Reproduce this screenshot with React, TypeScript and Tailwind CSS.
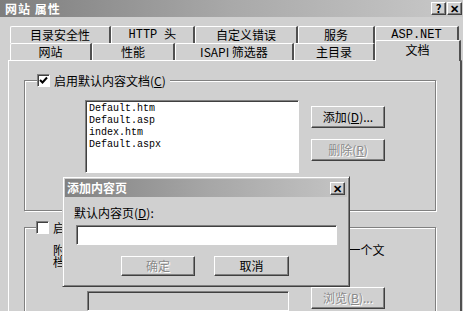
const font = "font-['Noto_Sans_CJK_SC','Noto_Sans_CJK_JP',sans-serif]";

const raised =
  "border border-t-white border-l-white border-r-[#404040] border-b-[#404040] shadow-[inset_-1px_-1px_0_#808080]";
const sunken =
  "border border-t-[#808080] border-l-[#808080] border-r-white border-b-white shadow-[inset_1px_1px_0_#404040]";
const etched = "border border-[#808080] shadow-[1px_1px_0_#fff,inset_1px_1px_0_#fff]";

const Btn = ({ children, disabled, className = "" }: { children: React.ReactNode; disabled?: boolean; className?: string }) => (
  <div
    className={`${raised} flex items-center justify-center text-[12px] leading-none bg-[#d0d0d0] ${
      disabled ? "text-[#8a8a8a] [text-shadow:1px_1px_0_#fff]" : "text-black"
    } ${className}`}
  >
    {children}
  </div>
);

const CapBtn = ({ children }: { children: React.ReactNode }) => (
  <div className={`${raised} w-[15px] h-[13px] flex items-center justify-center bg-[#d0d0d0] text-[11px] font-bold leading-none text-black`}>
    {children}
  </div>
);

const Check = ({ checked }: { checked?: boolean }) => (
  <div className={`${sunken} w-[13px] h-[13px] bg-white flex items-center justify-center`}>
    {checked && (
      <svg width="9" height="9" viewBox="0 0 9 9">
        <path d="M1 4 L3.5 6.5 L8 1.5" fill="none" stroke="#000" strokeWidth="2" />
      </svg>
    )}
  </div>
);

const Tab = ({ label, w, mono }: { label: string; w: number; mono?: boolean }) => (
  <div
    style={{ width: w }}
    className={`h-full shrink-0 border-t border-l border-t-white border-l-white border-r-2 border-r-[#505050] rounded-tl-[2px] flex items-center justify-center text-[12px] leading-none text-black ${
      mono ? "font-['Liberation_Mono',monospace] text-[11px]" : ""
    }`}
  >
    {label}
  </div>
);

export default function App() {
  return (
    <div className={`relative w-[463px] h-[311px] overflow-hidden bg-[#d0d0d0] ${font}`}>
      {/* title bar */}
      <div className="h-[17px] flex items-center justify-between pl-[5px] pr-[1px] bg-gradient-to-r from-[#7e7e7e] via-[#a9a9a9] to-[#c9c9c9]">
        <span className="text-white font-bold text-[12px] leading-none tracking-[1px]">网站 属性</span>
        <div className="flex gap-[1px]">
          <CapBtn>?</CapBtn>
          <CapBtn>✕</CapBtn>
        </div>
      </div>

      <div className="pt-[9px] pl-[8px]">
        {/* tab row 1 */}
        <div className="flex h-[17px] pl-[2px]">
          <Tab label="目录安全性" w={101} />
          <Tab label="HTTP 头" w={84} mono />
          <Tab label="自定义错误" w={103} />
          <Tab label="服务" w={77} />
          <Tab label="ASP.NET" w={84} mono />
        </div>
        {/* tab row 2 */}
        <div className="flex h-[17px] pl-[2px] relative z-10">
          <Tab label="网站" w={82} />
          <Tab label="性能" w={83} />
          <Tab label="ISAPI 筛选器" w={119} />
          <Tab label="主目录" w={81} />
          <div className="w-[86px] h-[21px] -mt-[3px] shrink-0 bg-[#d0d0d0] border-t border-l border-t-white border-l-white border-r-2 border-r-[#505050] rounded-tl-[2px] flex items-start justify-center pt-[3px] text-[12px] leading-none">
            文档
          </div>
        </div>

        {/* panel */}
        <div className="w-[454px] h-[260px] border-t border-l border-t-white border-l-white border-r-2 border-r-[#505050] pt-[19px] pl-[15px]">
          {/* group 1 */}
          <div className={`relative w-[412px] h-[131px] ${etched}`}>
            <div className="absolute -top-[7px] left-[12px] flex items-center gap-[4px] bg-[#d0d0d0] pr-[4px]">
              <Check checked />
              <span className="text-[12px] leading-none">
                启用默认内容文档(<u>C</u>)
              </span>
            </div>
            <div className="flex pt-[19px] pl-[60px]">
              <div className={`${sunken} w-[214px] h-[73px] bg-white pt-[2px] pl-[3px] font-['Liberation_Mono',monospace] text-[10px] leading-[12px] text-black`}>
                <div>Default.htm</div>
                <div>Default.asp</div>
                <div>index.htm</div>
                <div>Default.aspx</div>
              </div>
              <div className="flex flex-col gap-[11px] pt-[6px] pl-[12px]">
                <Btn className="w-[74px] h-[22px]">
                  添加(<u>D</u>)...
                </Btn>
                <Btn className="w-[74px] h-[22px]" disabled>
                  删除(<u>R</u>)
                </Btn>
              </div>
            </div>
          </div>

          {/* group 2 */}
          <div className={`relative mt-[16px] w-[412px] h-[120px] ${etched}`}>
            <div className="absolute -top-[7px] left-[11px] flex items-center gap-[4px] bg-[#d0d0d0] pr-[4px]">
              <Check />
              <span className="text-[12px] leading-none">
                启用文档页脚(<u>O</u>)
              </span>
            </div>
            <div className="pt-[16px] pl-[28px] text-[12px] leading-[12px]">
              <div>附加一个 HTML 格式的页脚到您的 Web 服务器返回的每一个文</div>
              <div>档。</div>
            </div>
            <div className="flex items-start pt-[19px] pl-[62px]">
              <div className={`${sunken} w-[202px] h-[20px] mt-[4px] bg-[#d0d0d0]`} />
              <Btn className="ml-[22px] w-[74px] h-[22px]" disabled>
                浏览(<u>B</u>)...
              </Btn>
            </div>
          </div>
        </div>
      </div>

      {/* dialog */}
      <div className="absolute left-[62px] top-[176px] w-[288px] h-[111px] bg-[#d0d0d0] border border-t-[#d0d0d0] border-l-[#d0d0d0] border-r-[#404040] border-b-[#404040] shadow-[inset_1px_1px_0_#fff,inset_-1px_-1px_0_#808080] p-[2px]">
        <div className="h-[18px] flex items-center justify-between pl-[2px] pr-[2px] bg-gradient-to-r from-[#828282] via-[#a6a6a6] to-[#c4c4c4]">
          <span className="text-white font-bold text-[12px] leading-none">添加内容页</span>
          <CapBtn>✕</CapBtn>
        </div>
        <div className="pt-[10px] pl-[9px] text-[12px] leading-none">
          默认内容页(<u>D</u>):
        </div>
        <div className={`${sunken} ml-[11px] mt-[6px] w-[261px] h-[20px] bg-white`} />
        <div className="flex gap-[19px] mt-[11px] ml-[56px]">
          <Btn className="w-[74px] h-[20px]" disabled>
            确定
          </Btn>
          <Btn className="w-[75px] h-[20px]">取消</Btn>
        </div>
      </div>
    </div>
  );
}
